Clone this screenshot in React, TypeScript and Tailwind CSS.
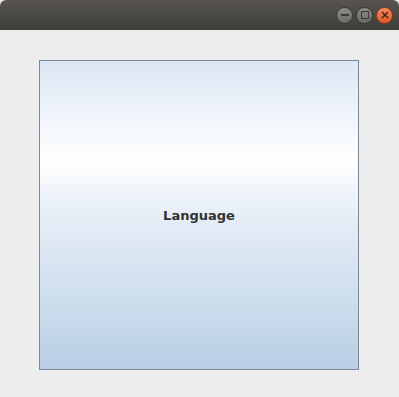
export default function App() {
  return (
    <div className="w-[399px] h-[397px] flex flex-col bg-[#ededed] overflow-hidden" style={{ fontFamily: '"DejaVu Sans", sans-serif' }}>
      {/* Title bar */}
      <div className="h-[30px] shrink-0 flex items-center justify-end gap-[3px] pr-[6px] bg-gradient-to-b from-[#57544e] to-[#3e3d39] rounded-t-[6px]">
        <div className="w-[17px] h-[17px] rounded-full bg-gradient-to-b from-[#8e8c87] to-[#6b6964] border border-[#3a3935] flex items-center justify-center">
          <div className="w-[8px] h-[2px] bg-[#3a3935]" />
        </div>
        <div className="w-[17px] h-[17px] rounded-full bg-gradient-to-b from-[#8e8c87] to-[#6b6964] border border-[#3a3935] flex items-center justify-center">
          <div className="w-[8px] h-[8px] border-[1.5px] border-[#3a3935]" />
        </div>
        <div className="w-[17px] h-[17px] rounded-full bg-gradient-to-b from-[#f58a5c] to-[#e2572a] border border-[#8a3a1c] flex items-center justify-center">
          <svg width="8" height="8" viewBox="0 0 8 8">
            <path d="M1 1L7 7M7 1L1 7" stroke="#4a2414" strokeWidth="1.5" />
          </svg>
        </div>
      </div>
      {/* Content */}
      <div className="flex-1 pt-[30px] pl-[39px]">
        <div className="w-[320px] h-[310px] border border-[#7b8996] bg-[linear-gradient(to_bottom,#dce7f4_0%,#ffffff_32%,#e6eef7_50%,#b9cfe5_100%)] flex items-center justify-center pt-[2px]">
          <span className="text-[13px] font-bold text-[#333333]">Language</span>
        </div>
      </div>
    </div>
  );
}
